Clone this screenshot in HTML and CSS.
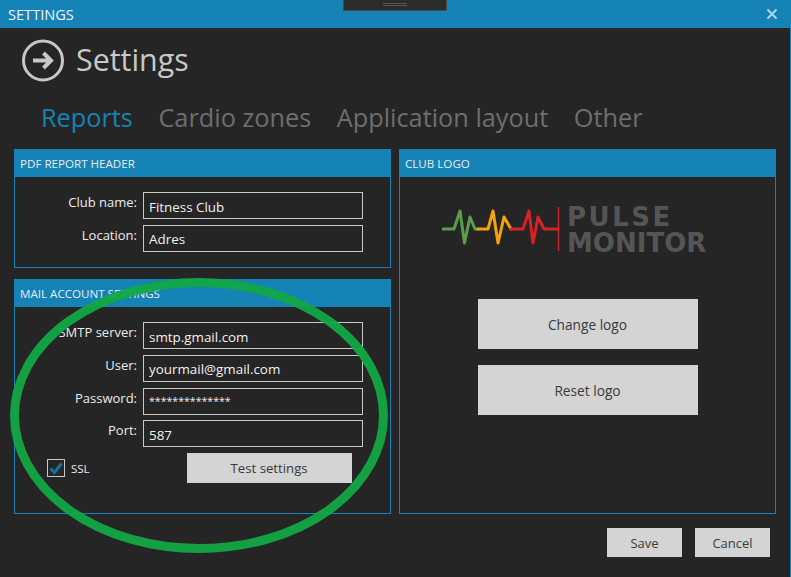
FILE: index.html
```html
<!DOCTYPE html>
<html lang="en">
<head>
  <meta charset="UTF-8" />
  <title>Settings</title>
  <link rel="stylesheet" href="styles.css">
</head>
<body>
  <div class="window">
    <div class="notch"><span class="notch-grip"></span></div>

    <header class="titlebar">
      <span>SETTINGS</span>
      <svg class="close" width="12" height="12" viewBox="0 0 12 12">
        <path d="M1.5 1.5 L10.5 10.5 M10.5 1.5 L1.5 10.5" />
      </svg>
    </header>

    <div class="page-head">
      <svg class="back" width="44" height="44" viewBox="0 0 44 44">
        <circle cx="22" cy="21.5" r="19.5" />
        <path d="M12 21.5 H29 M22.5 14 L30 21.5 L22.5 29" />
      </svg>
      <h1>Settings</h1>
    </div>

    <nav class="tabs">
      <a class="active" href="#reports">Reports</a>
      <a href="#cardio">Cardio zones</a>
      <a href="#layout">Application layout</a>
      <a href="#other">Other</a>
    </nav>

    <main class="columns">
      <div class="stack">
        <section class="panel panel-pdf">
          <h2>PDF REPORT HEADER</h2>
          <div class="form">
            <label for="club">Club name:</label>
            <input id="club" type="text" value="Fitness Club">
            <label for="location">Location:</label>
            <input id="location" type="text" value="Adres">
          </div>
        </section>

        <section class="panel panel-mail">
          <h2>MAIL ACCOUNT SETTINGS</h2>
          <div class="form">
            <label for="smtp">SMTP server:</label>
            <input id="smtp" type="text" value="smtp.gmail.com">
            <label for="user">User:</label>
            <input id="user" type="text" value="yourmail@gmail.com">
            <label for="password">Password:</label>
            <input id="password" class="masked" type="text" value="**************">
            <label for="port">Port:</label>
            <input id="port" type="text" value="587">
          </div>
          <div class="mail-actions">
            <div class="ssl">
              <span class="checkbox">
                <svg width="16" height="16" viewBox="0 0 16 16"><path d="M2.5 8.5 L6.5 12.5 L13.5 3.5" /></svg>
              </span>
              <span>SSL</span>
            </div>
            <button class="btn btn-test">Test settings</button>
          </div>
        </section>
      </div>

      <section class="panel panel-logo">
        <h2>CLUB LOGO</h2>
        <div class="logo-body">
          <div class="logo">
            <svg width="118" height="46" viewBox="441 206 118 46">
              <path class="pulse-green" d="M442 229 H453 L459 211 L463.500 243 L469 217 L474 229 H477" />
              <path class="pulse-orange" d="M477 229 H487 L492 211 L497 243 L503 217 L510 229" />
              <path class="pulse-red" d="M510 229 H522 L528 211 L532 243 L537 217 L543 229 H557" />
              <path class="pulse-bar" d="M557.500 207 V251" />
            </svg>
            <div class="logo-text">
              <span class="logo-top">PULSE</span>
              <span class="logo-bottom">MONITOR</span>
            </div>
          </div>
          <button class="btn btn-logo">Change logo</button>
          <button class="btn btn-logo">Reset logo</button>
        </div>
      </section>
    </main>

    <footer class="actions">
      <button class="btn btn-foot">Save</button>
      <button class="btn btn-foot">Cancel</button>
    </footer>

    <!-- marker drawn over the screenshot -->
    <svg class="marker" width="400" height="290" viewBox="0 0 400 290">
      <ellipse cx="199" cy="137.500" rx="184.500" ry="133" />
    </svg>
  </div>
</body>
</html>
```

FILE: styles.css
```css
* {
  box-sizing: border-box;
}
body {
  margin: 0;
  background: #252525;
  font-family: "Open Sans", "Noto Sans", sans-serif;
}
.window {
  position: relative;
  width: 791px;
  height: 577px;
  overflow: hidden;
  background: #252525;
  border-right: 1px solid #1583b6;
}
.notch {
  position: absolute;
  top: 0;
  left: 343px;
  width: 104px;
  height: 11px;
  background: #2b2b2b;
  border: 1px solid #4a4a4a;
  border-top: none;
  display: flex;
  justify-content: center;
}
.notch-grip {
  width: 24px;
  height: 3px;
  margin-top: 3px;
  border-top: 1px solid #555;
  border-bottom: 1px solid #555;
}
.titlebar {
  height: 28px;
  background: #1583b6;
  color: #f2f2f2;
  font-size: 14.600px;
  padding: 0 12px 0 8px;
  display: flex;
  align-items: center;
  justify-content: space-between;
}
.close path {
  fill: none;
  stroke: #a9d6ea;
  stroke-width: 2;
}
.page-head {
  height: 44px;
  margin-top: 11px;
  padding-left: 21px;
  display: flex;
  align-items: center;
  gap: 11px;
}
.back circle,
.back path {
  fill: none;
  stroke: #c8c8c8;
}
.back circle {
  stroke-width: 3;
}
.back path {
  stroke-width: 4;
}
.page-head h1 {
  margin: 0 0 4px;
  font-size: 30.400px;
  font-weight: 400;
  color: #c8c8c8;
}
.tabs {
  height: 36px;
  margin-top: 16px;
  padding-left: 41px;
  display: flex;
  align-items: center;
  gap: 25.500px;
}
.tabs a {
  font-size: 25.300px;
  color: #6e6e6e;
  text-decoration: none;
}
.tabs a.active {
  color: #1583b6;
}
.columns {
  margin: 14px 0 0 14px;
  display: grid;
  grid-template-columns: 377px 377px;
  gap: 8px;
}
.stack {
  display: flex;
  flex-direction: column;
  gap: 11px;
}
.panel {
  border: 1px solid #1583b6;
}
.panel h2 {
  margin: 0;
  height: 27px;
  padding-left: 5px;
  background: #1583b6;
  color: #ececec;
  font-size: 11.600px;
  font-weight: 400;
  line-height: 27px;
}
.panel-pdf {
  height: 119px;
}
.panel-mail {
  height: 235px;
}
.panel-logo {
  height: 365px;
}
.form {
  padding: 15px 0 0 0;
  display: grid;
  grid-template-columns: 122px 220px;
  column-gap: 6px;
  row-gap: 5.750px;
}
.form label {
  color: #ececec;
  font-size: 13px;
  line-height: 21px;
  text-align: right;
}
.form input {
  height: 27px;
  padding: 2px 5px 0;
  background: transparent;
  border: 1px solid #c8c8c8;
  border-radius: 0;
  color: #f2f2f2;
  font-family: inherit;
  font-size: 13.400px;
}
.form input.masked {
  padding-top: 0;
  font-size: 10.600px;
}
.mail-actions {
  margin-top: 6px;
  padding-left: 32px;
  display: flex;
  align-items: flex-start;
}
.ssl {
  margin-top: 6px;
  display: flex;
  align-items: center;
  gap: 6px;
  color: #ececec;
  font-size: 11.500px;
}
.checkbox {
  width: 18px;
  height: 18px;
  border: 1px solid #c8c8c8;
  display: flex;
  align-items: center;
  justify-content: center;
}
.checkbox path {
  fill: none;
  stroke: #1870a0;
  stroke-width: 3;
}
.btn {
  background: #d4d4d4;
  border: none;
  color: #3a3a3a;
  font-family: inherit;
  padding: 0;
}
.btn-test {
  width: 165px;
  height: 30px;
  margin-left: 97px;
  font-size: 13.200px;
}
.logo-body {
  display: flex;
  flex-direction: column;
  align-items: center;
}
.logo {
  align-self: flex-start;
  height: 46px;
  margin: 29px 0 47px 42px;
  display: flex;
  align-items: center;
  gap: 7px;
}
.logo svg {
  flex: none;
}
.logo path {
  fill: none;
  stroke-width: 3;
  stroke-linejoin: round;
  stroke-linecap: round;
}
.logo .pulse-bar {
  stroke-width: 1.500;
  stroke-linecap: butt;
  stroke: #c9272c;
}
.pulse-green {
  stroke: #5a9e4b;
}
.pulse-orange {
  stroke: #f5a30a;
}
.pulse-red {
  stroke: #d82127;
}
.logo-text {
  display: flex;
  flex-direction: column;
  margin-top: 1px;
  font-family: "DejaVu Sans", sans-serif;
  font-weight: 700;
  font-size: 26px;
  line-height: 26px;
  color: #555;
}
.logo-top {
  letter-spacing: 2.500px;
}
.btn-logo {
  width: 220px;
  height: 50px;
  margin-bottom: 16px;
  padding-top: 1px;
  font-size: 13.700px;
}
.actions {
  margin-top: 14px;
  padding-right: 20px;
  display: flex;
  justify-content: flex-end;
  gap: 13px;
}
.btn-foot {
  width: 75px;
  height: 29px;
  font-size: 13px;
}
.marker {
  position: absolute;
  top: 278px;
  left: 0;
}
.marker ellipse {
  fill: none;
  stroke: #12a845;
  stroke-opacity: 0.94;
  stroke-width: 9;
}
```
